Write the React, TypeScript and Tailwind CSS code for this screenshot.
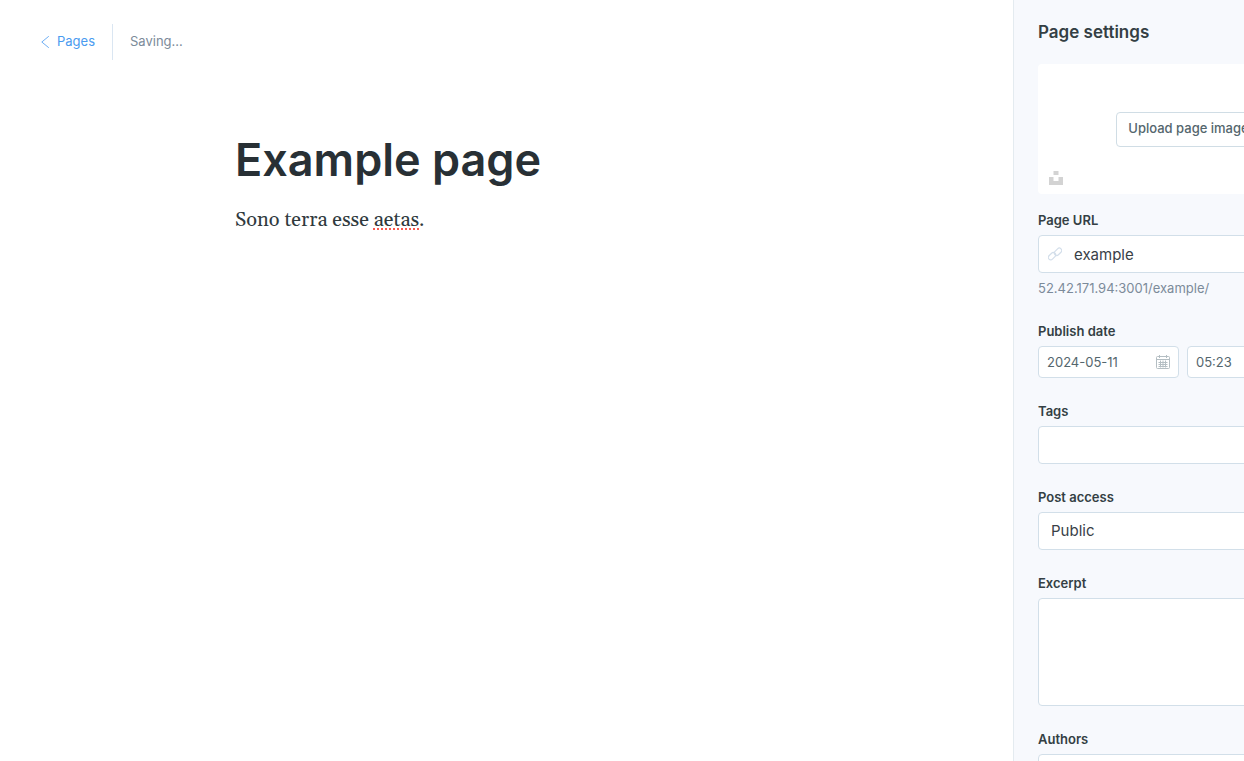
import { useState, type ReactNode } from 'react';

function ChevronLeft() {
  return (
    <svg className="h-3 w-2" viewBox="0 0 8 12" fill="none" stroke="currentColor" strokeWidth="0.8" strokeLinecap="round" aria-hidden="true">
      <path d="M7.500 0.500L0.800 6l6.700 5.500" />
    </svg>
  );
}

function UnsplashIcon() {
  return (
    <svg className="h-[14px] w-[14px]" viewBox="0 0 14 14" fill="#d3d3d3" aria-hidden="true">
      <path d="M4.500 0h5v4h-5zM0 6h4.500v4h5V6H14v8H0z" />
    </svg>
  );
}

function LinkIcon() {
  return (
    <svg className="h-[14px] w-[14px]" viewBox="0 0 14 14" fill="none" stroke="#d3deea" strokeWidth="1.2" aria-hidden="true">
      <rect x="-0.200" y="6.800" width="8.400" height="4.800" rx="2.400" transform="rotate(-45 4 9.200)" />
      <rect x="5.800" y="2.400" width="8.400" height="4.800" rx="2.400" transform="rotate(-45 10 4.800)" />
    </svg>
  );
}

function CalendarIcon() {
  return (
    <svg className="h-[14px] w-[14px]" viewBox="0 0 14 14" fill="none" stroke="#b4bec3" strokeWidth="1" aria-hidden="true">
      <rect x="0.500" y="1.500" width="13" height="12" rx="1" />
      <path d="M1 4.500h12M2.500 7.500h9M2.500 9.500h9M2.500 11.500h9M4.500 5.500v7M7 5.500v7M9.500 5.500v7M3.500 0v3M10.500 0v3" />
    </svg>
  );
}

const control = 'w-full rounded-[4px] border border-[#d2dfe9] bg-white text-[#394047] outline-none';

function Field({ id, label, children }: { id: string; label: string; children: ReactNode }) {
  return (
    <div className="flex flex-col">
      <label htmlFor={id} className="mb-[5px] text-[13px] font-semibold leading-5 text-[#343f44]">
        {label}
      </label>
      {children}
    </div>
  );
}

export default function App() {
  const [slug, setSlug] = useState('example');
  const [date, setDate] = useState('2024-05-11');
  const [time, setTime] = useState('05:23');

  return (
    <div className="flex h-screen overflow-hidden bg-white font-['Inter',sans-serif]">
      <main className="flex min-w-0 flex-1 flex-col">
        <header className="flex items-center px-[41px] pt-6">
          <a href="#pages" className="flex h-9 items-center gap-2 border-r border-[#dae6f2] pr-[17px] text-[13px] text-[#4a9bf0]">
            <ChevronLeft />
            Pages
          </a>
          <span className="pl-[17px] text-[13px] text-[#7c8b9a]">Saving...</span>
        </header>
        <article className="mx-auto w-full max-w-[543px] pt-[72px]">
          <h1 className="text-[45px] font-semibold leading-[56px] text-[#283035]">Example page</h1>
          <p className="mt-4 font-['Georgia','Gelasio','Liberation_Serif',serif] text-[20px] leading-8 text-[#303a3e]">
            Sono terra esse{' '}
            <span className="underline decoration-[#fb5a50] decoration-dotted decoration-2 underline-offset-2">aetas</span>.
          </p>
        </article>
      </main>

      <aside className="-mr-[119px] w-[350px] shrink-0 overflow-hidden border-l border-[#e4ebf0] bg-[#f7f9fd] px-6 pt-5">
        <h2 className="text-[17px] font-semibold leading-6 text-[#343f44]">Page settings</h2>

        <section className="relative mt-5 flex h-[130px] items-center justify-center rounded-[4px] bg-white">
          <button type="button" className="h-[35px] rounded-[4px] border border-[#d0dde5] px-[11px] text-[13px] font-medium text-[#54666d]">
            Upload page image
          </button>
          <button type="button" aria-label="Choose an Unsplash image" className="absolute bottom-[9px] left-[11px]">
            <UnsplashIcon />
          </button>
        </section>

        <form className="mt-4 flex flex-col gap-[23px]">
          <Field id="slug" label="Page URL">
            <div className={`${control} flex h-[38px] items-center gap-3 px-[9px]`}>
              <LinkIcon />
              <input id="slug" value={slug} onChange={(e) => setSlug(e.target.value)} className="h-full min-w-0 flex-1 bg-transparent text-[15px] outline-none" />
            </div>
            <p className="mt-[5px] text-[13px] leading-5 text-[#7c8b9a]">52.42.171.94:3001/{slug}/</p>
          </Field>

          <Field id="date" label="Publish date">
            <div className="flex gap-2">
              <div className={`${control} flex h-8 max-w-[141px] items-center px-2`}>
                <input id="date" value={date} onChange={(e) => setDate(e.target.value)} className="h-full min-w-0 flex-1 bg-transparent text-[13px] text-[#54666d] outline-none" />
                <CalendarIcon />
              </div>
              <div className={`${control} flex h-8 min-w-0 flex-1 items-center px-2`}>
                <input aria-label="Publish time" value={time} onChange={(e) => setTime(e.target.value)} className="h-full min-w-0 flex-1 bg-transparent text-[13px] text-[#54666d] outline-none" />
              </div>
            </div>
          </Field>

          <Field id="tags" label="Tags">
            <input id="tags" className={`${control} h-[38px] px-3 text-[15px]`} />
          </Field>

          <Field id="access" label="Post access">
            <select id="access" defaultValue="public" className={`${control} h-[38px] appearance-none px-3 text-[15px]`}>
              <option value="public">Public</option>
              <option value="members">Members only</option>
            </select>
          </Field>

          <Field id="excerpt" label="Excerpt">
            <textarea id="excerpt" className={`${control} h-[108px] resize-none px-3 py-2 text-[15px]`} />
          </Field>

          <Field id="authors" label="Authors">
            <input id="authors" className={`${control} h-[38px] px-3 text-[15px]`} />
          </Field>
        </form>
      </aside>
    </div>
  );
}
